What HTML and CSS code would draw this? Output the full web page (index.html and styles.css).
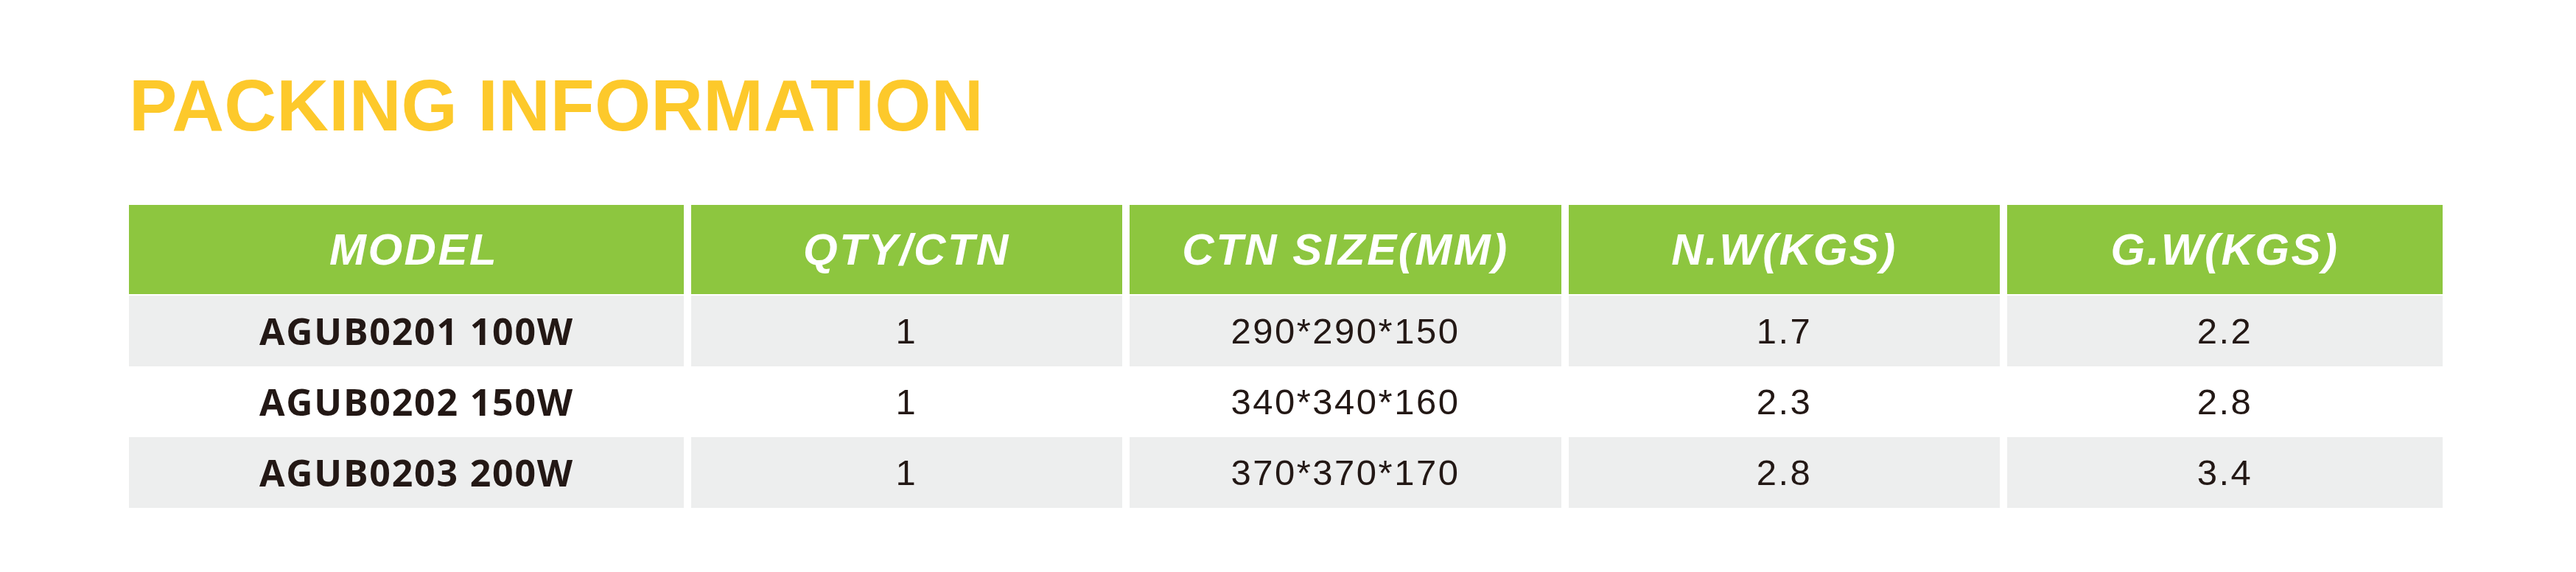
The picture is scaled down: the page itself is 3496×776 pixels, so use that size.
FILE: index.html
```html
<!DOCTYPE html>
<html lang="en">
<head>
<meta charset="utf-8">
<title>Packing Information</title>
<link rel="stylesheet" href="styles.css">
</head>
<body>
<main class="page">
  <h1 class="title">PACKING INFORMATION</h1>
  <div class="table">
    <div class="cell head first">MODEL</div>
    <div class="cell head">QTY/CTN</div>
    <div class="cell head">CTN SIZE(MM)</div>
    <div class="cell head">N.W(KGS)</div>
    <div class="cell head">G.W(KGS)</div>

    <div class="cell model shade">AGUB0201 100W</div>
    <div class="cell shade">1</div>
    <div class="cell shade">290*290*150</div>
    <div class="cell shade">1.7</div>
    <div class="cell shade">2.2</div>

    <div class="cell model">AGUB0202 150W</div>
    <div class="cell">1</div>
    <div class="cell">340*340*160</div>
    <div class="cell">2.3</div>
    <div class="cell">2.8</div>

    <div class="cell model shade">AGUB0203 200W</div>
    <div class="cell shade">1</div>
    <div class="cell shade">370*370*170</div>
    <div class="cell shade">2.8</div>
    <div class="cell shade">3.4</div>
  </div>
</main>
</body>
</html>
```

FILE: styles.css
```css
html, body {
  margin: 0;
  padding: 0;
  background: #ffffff;
}

.page {
  padding: 94px 181px 0 175px;
}

.title {
  margin: 0;
  font-family: "Liberation Sans", Arial, sans-serif;
  font-weight: 700;
  font-size: 98px;
  line-height: 1;
  color: #fdc92b;
  letter-spacing: 0.2px;
}

.table {
  margin-top: 86px;
  display: grid;
  grid-template-columns: 753px 585px 586px 585px 1fr;
  grid-template-rows: 123px 96px 96px 96px;
  column-gap: 10px;
  row-gap: 0;
}

.cell {
  display: flex;
  align-items: center;
  justify-content: center;
  font-family: "Liberation Sans", Arial, sans-serif;
  font-size: 49px;
  letter-spacing: 2.5px;
  color: #231815;
  background: #ffffff;
}

.head {
  background: #8dc63f;
  color: #ffffff;
  font-weight: 700;
  font-style: italic;
  font-size: 60px;
  letter-spacing: 2.5px;
  margin-bottom: 2px;
}

.first {
  padding-left: 20px;
}

.shade {
  background: #edeeee;
}

.model {
  padding-left: 28px;
  font-family: "Open Sans", "Noto Sans", sans-serif;
  font-weight: 700;
  font-size: 50px;
  letter-spacing: 1.8px;
}
```
